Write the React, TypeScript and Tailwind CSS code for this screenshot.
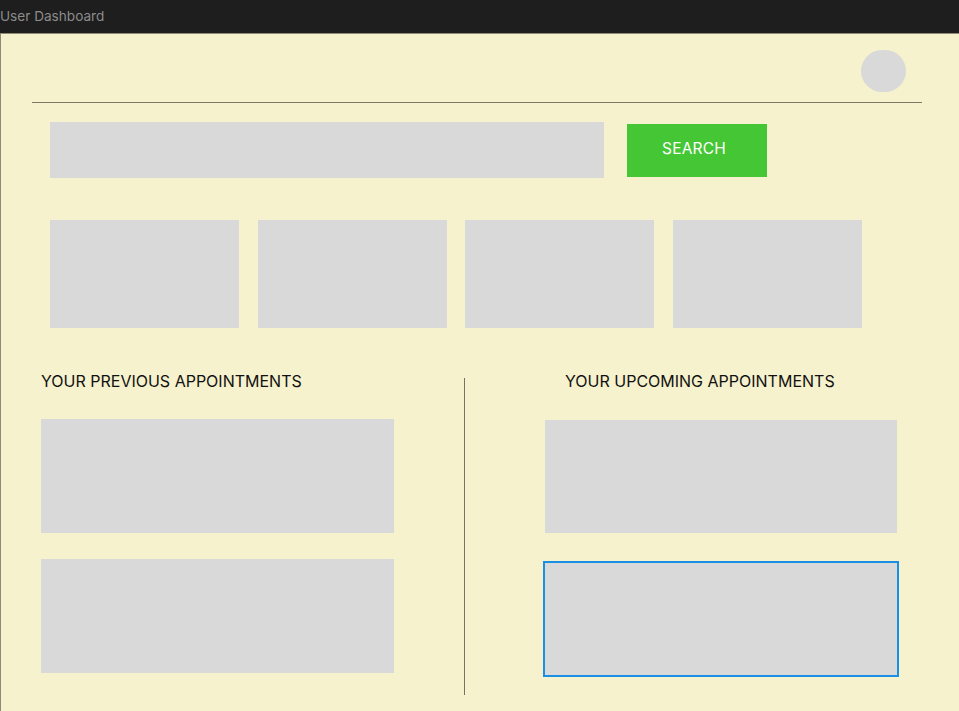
export default function App() {
  const stats = [1, 2, 3, 4];

  return (
    <div className="w-[959px] h-[711px] flex flex-col overflow-hidden font-['Inter','Noto_Sans',sans-serif]">
      <div className="h-[33px] shrink-0 bg-[#1e1e1e] flex items-center">
        <span className="text-[13.6px] leading-none text-[#8c8c8c]">User Dashboard</span>
      </div>

      <div className="flex-1 bg-[#f6f2cd] border-l border-t border-[#8f8b72] flex flex-col">
        {/* profile */}
        <div className="flex justify-end pt-[16px] pr-[53px]">
          <div className="w-[45px] h-[42px] rounded-full bg-[#d9d9d9]" />
        </div>
        <div className="ml-[31px] mr-[37px] mt-[10px] h-px bg-[#7b7865]" />

        {/* search */}
        <div className="flex items-start ml-[49px] mt-[19px]">
          <div className="w-[554px] h-[56px] bg-[#d9d9d9]" />
          <button className="ml-[23px] mt-[2px] w-[140px] h-[53px] pb-[4px] pr-[6px] bg-[#44c635] text-white text-[15.5px] tracking-[0.2px]">
            SEARCH
          </button>
        </div>

        {/* stat cards */}
        <div className="flex gap-[18.6px] ml-[49px] mt-[42px]">
          {stats.map((s) => (
            <div key={s} className="w-[189px] h-[108px] bg-[#d9d9d9]" />
          ))}
        </div>

        {/* appointments */}
        <div className="flex mt-[41px] flex-1">
          <div className="w-[463px] shrink-0 pl-[40px] flex flex-col">
            <h3 className="text-[16px] leading-[20px] text-[#111] mt-[2px]">YOUR PREVIOUS APPOINTMENTS</h3>
            <div className="mt-[28px] w-[353px] h-[114px] bg-[#d9d9d9]" />
            <div className="mt-[26px] w-[353px] h-[114px] bg-[#d9d9d9]" />
          </div>

          <div className="w-px shrink-0 bg-[#77735e] mt-[9px] h-[317px]" />

          <div className="flex flex-col pl-[80px]">
            <h3 className="ml-[20px] text-[16px] leading-[20px] text-[#111] mt-[2px]">YOUR UPCOMING APPOINTMENTS</h3>
            <div className="mt-[29px] w-[352px] h-[113px] bg-[#d9d9d9]" />
            <div className="mt-[28px] -ml-[2px] w-[356px] h-[116px] bg-[#d9d9d9] border-2 border-[#1a8fe6]" />
          </div>
        </div>
      </div>
    </div>
  );
}
